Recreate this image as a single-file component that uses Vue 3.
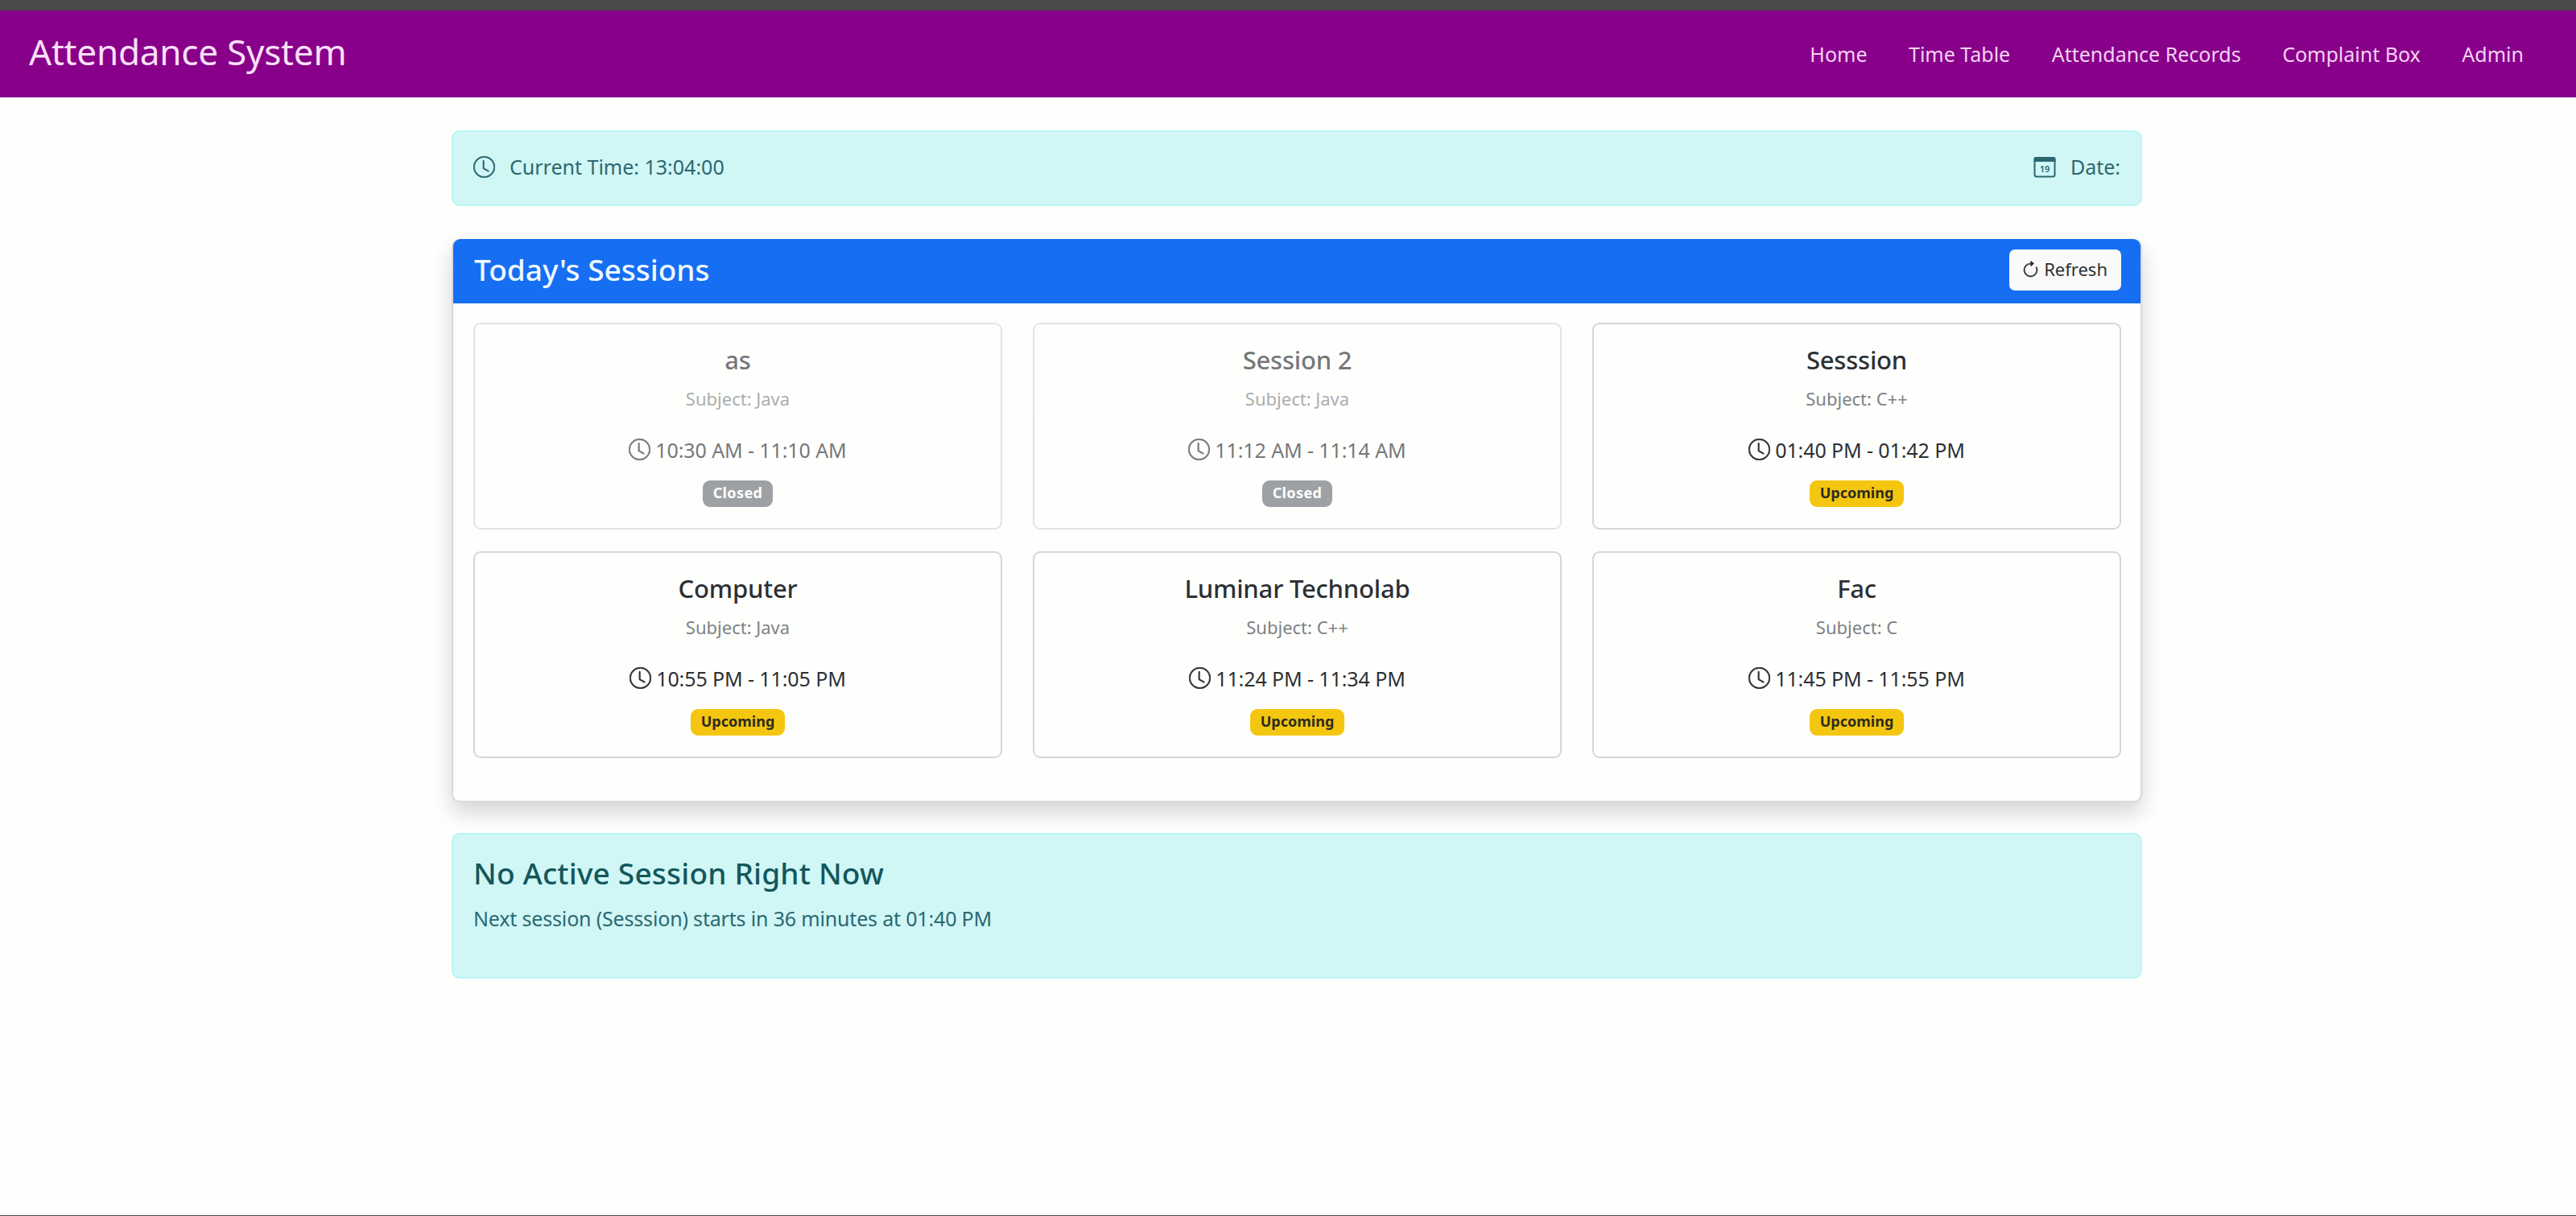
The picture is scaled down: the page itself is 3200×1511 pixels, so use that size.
<script setup>
const links = ['Home', 'Time Table', 'Attendance Records', 'Complaint Box', 'Admin']

const sessions = [
  { name: 'as', subject: 'Java', time: '10:30 AM - 11:10 AM', closed: true },
  { name: 'Session 2', subject: 'Java', time: '11:12 AM - 11:14 AM', closed: true },
  { name: 'Sesssion', subject: 'C++', time: '01:40 PM - 01:42 PM', closed: false },
  { name: 'Computer', subject: 'Java', time: '10:55 PM - 11:05 PM', closed: false },
  { name: 'Luminar Technolab', subject: 'C++', time: '11:24 PM - 11:34 PM', closed: false },
  { name: 'Fac', subject: 'C', time: '11:45 PM - 11:55 PM', closed: false },
]
</script>

<template>
  <div class="page">
    <svg class="sprite" width="0" height="0" aria-hidden="true">
      <symbol id="clock" viewBox="0 0 16 16">
        <path d="M8 3.5a.5.5 0 0 0-1 0V9a.5.5 0 0 0 .252.434l3.5 2a.5.5 0 0 0 .496-.868L8 8.71z" />
        <path d="M8 16A8 8 0 1 0 8 0a8 8 0 0 0 0 16m7-8A7 7 0 1 1 1 8a7 7 0 0 1 14 0" />
      </symbol>
    </svg>

    <div class="strip"></div>
    <nav class="navbar">
      <span class="brand">Attendance System</span>
      <div class="links">
        <a v-for="link in links" :key="link">{{ link }}</a>
      </div>
    </nav>

    <main class="container">
      <section class="alert status">
        <div class="item">
          <svg class="icon clock"><use href="#clock" /></svg>
          <span>Current Time: 13:04:00</span>
        </div>
        <div class="item date">
          <svg class="icon calendar" viewBox="0 0 28 27">
            <path d="M3 1h22a2.5 2.5 0 0 1 2.500 2.500V7H.5V3.500A2.500 2.500 0 0 1 3 1z" />
            <rect x="1.500" y="2" width="25" height="23.500" rx="2.500" fill="none" stroke="currentColor" stroke-width="2" />
            <text x="14" y="19.500" text-anchor="middle">19</text>
          </svg>
          <span>Date:</span>
        </div>
      </section>

      <section class="panel">
        <header class="panel-head">
          <h2>Today's Sessions</h2>
          <button class="refresh" type="button">
            <svg class="icon arrow" viewBox="0 0 16 16">
              <path d="M8 3a5 5 0 1 0 4.546 2.914.5.5 0 0 1 .908-.417A6 6 0 1 1 8 2z" />
              <path d="M8 4.466V.534a.25.25 0 0 1 .41-.192l2.360 1.966c.12.1.12.284 0 .384L8.410 4.658A.25.25 0 0 1 8 4.466" />
            </svg>
            <span>Refresh</span>
          </button>
        </header>
        <div class="grid">
          <article v-for="s in sessions" :key="s.name" class="card" :class="{ closed: s.closed }">
            <h3>{{ s.name }}</h3>
            <p class="subject">Subject: {{ s.subject }}</p>
            <p class="time">
              <svg class="icon clock"><use href="#clock" /></svg>
              <span>{{ s.time }}</span>
            </p>
            <span class="badge">{{ s.closed ? 'Closed' : 'Upcoming' }}</span>
          </article>
        </div>
      </section>

      <section class="alert notice">
        <h2>No Active Session Right Now</h2>
        <p>Next session (Sesssion) starts in 36 minutes at 01:40 PM</p>
      </section>
    </main>
  </div>
</template>

<style>
body {
  margin: 0;
  background: #fefffd;
}
</style>

<style scoped>
.page {
  box-sizing: border-box;
  height: 1511px;
  overflow: hidden;
  border-bottom: 1px solid #4a4a4a;
  background: #fefffd;
  color: #2c3034;
  font-family: "Noto Sans", "Open Sans", sans-serif;
  font-size: 25px;
}

.sprite {
  position: absolute;
}

h2,
h3,
p {
  margin: 0;
  font-weight: 500;
}

p {
  font-weight: 400;
}

.icon {
  flex: none;
  display: block;
  fill: currentColor;
}

.clock {
  width: 27px;
  height: 27px;
  stroke: currentColor;
  stroke-width: 0.25px;
  overflow: visible;
}

.strip {
  height: 13px;
  background: #4a4a48;
}

.navbar {
  display: flex;
  justify-content: space-between;
  box-sizing: border-box;
  height: 108px;
  padding: 0 65px 0 36px;
  background: #880089;
  color: #f5d2f5;
}

.brand {
  font-size: 44px;
  line-height: 102px;
  letter-spacing: -0.2px;
  color: #fbe0fb;
}

.links {
  display: flex;
  gap: 51.5px;
  line-height: 108px;
}

.container {
  width: 2100px;
  margin: 41px 0 0 561px;
}

.alert {
  box-sizing: border-box;
  border: 2px solid #b8f5f3;
  border-radius: 10px;
  background: #d0f7f6;
  color: #2b6870;
}

.status {
  display: flex;
  justify-content: space-between;
  align-items: center;
  height: 94px;
  padding: 0 25px 4px;
}

.item {
  display: flex;
  align-items: center;
  gap: 18px;
}

.calendar {
  width: 28px;
  height: 27px;
}

.calendar text {
  font: 600 11px "Noto Sans", sans-serif;
}

.panel {
  box-sizing: border-box;
  height: 700px;
  margin-top: 41px;
  border: 2px solid #d8d9d8;
  border-radius: 10px;
  background: #fefffd;
  box-shadow: 0 13px 26px rgba(0, 0, 0, 0.16);
}

.panel-head {
  display: flex;
  justify-content: space-between;
  align-items: center;
  box-sizing: border-box;
  height: 80px;
  margin: -2px 0 0;
  padding: 0 24px 4px 26px;
  border-radius: 9px 9px 0 0;
  background: #166ef3;
  color: #eff8ff;
}

.panel-head h2 {
  font-size: 37px;
  line-height: 46px;
}

.refresh {
  display: flex;
  align-items: center;
  gap: 7px;
  box-sizing: border-box;
  height: 51px;
  padding: 0 17px 2px 16px;
  border: 0;
  border-radius: 7px;
  background: #f9faf9;
  color: #2c3034;
  font: 400 22px "Noto Sans", sans-serif;
}

.arrow {
  width: 23px;
  height: 23px;
  margin: 2px -2px 0 -1px;
  stroke: currentColor;
  stroke-width: 0.3px;
}

.grid {
  display: grid;
  grid-template-columns: repeat(3, 657px);
  grid-auto-rows: 257px;
  column-gap: 38px;
  row-gap: 27px;
  padding: 24px 25px;
}

.card {
  display: flex;
  flex-direction: column;
  align-items: center;
  box-sizing: border-box;
  padding-top: 25px;
  border: 2px solid #d5d6d5;
  border-radius: 9px;
}

.closed {
  opacity: 0.65;
}

.card h3 {
  font-size: 31px;
  line-height: 38px;
  letter-spacing: -0.2px;
}

.subject {
  margin-top: 12px;
  font-size: 22px;
  line-height: 34px;
  color: #7d8285;
}

.time {
  display: flex;
  align-items: center;
  gap: 6px;
  margin-top: 28px;
  line-height: 38px;
  letter-spacing: -0.1px;
}

.time .clock {
  margin-top: -2px;
}

.badge {
  height: 33px;
  margin-top: 19px;
  padding: 0 13px;
  border-radius: 9px;
  background: #f5c60f;
  color: #2c2c20;
  font-size: 18px;
  font-weight: 700;
  line-height: 31px;
}

.closed .badge {
  background: #6c7074;
  color: #fff;
  letter-spacing: 0.4px;
}

.notice {
  height: 181px;
  margin-top: 38px;
  padding: 25px;
}

.notice h2 {
  color: #14575c;
  font-size: 37px;
  line-height: 46px;
  letter-spacing: 0.2px;
}

.notice p {
  margin-top: 13px;
  line-height: 40px;
  letter-spacing: -0.17px;
}
</style>
